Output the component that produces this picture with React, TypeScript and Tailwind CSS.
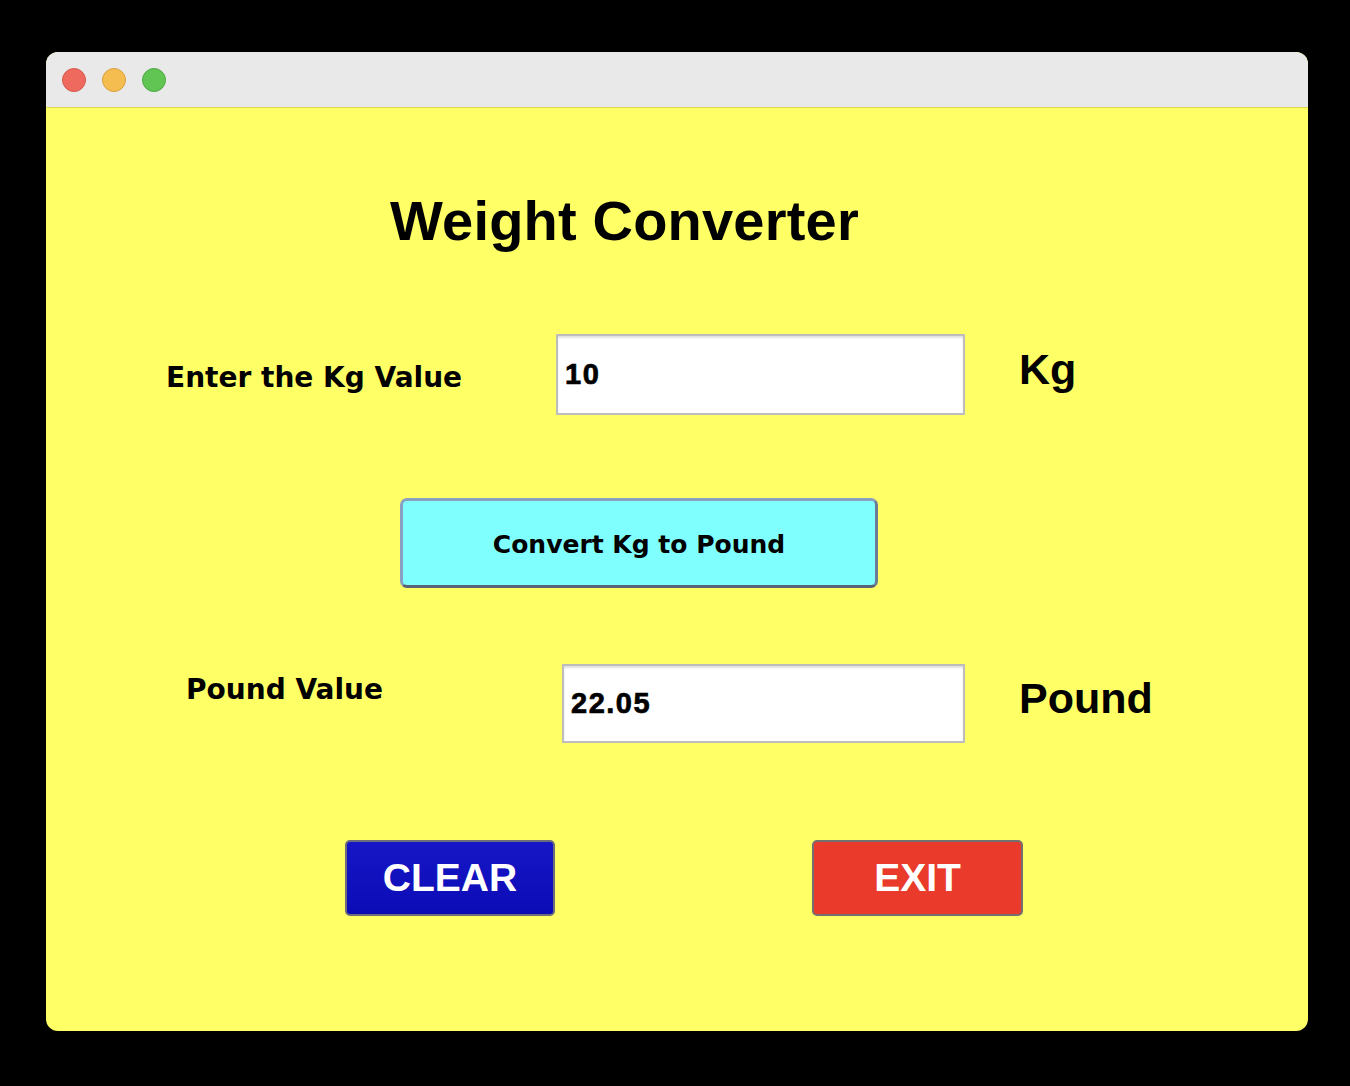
import React from 'react';

const verdana = "font-['DejaVu_Sans',Verdana,sans-serif] font-bold";
const arial = "font-['Liberation_Sans',Arial,sans-serif] font-bold";

const TrafficLights = () => (
  <div className="flex items-center gap-4 pl-4">
    <span className="w-6 h-6 rounded-full bg-[#ee6a5f] border border-[#d8574d]" />
    <span className="w-6 h-6 rounded-full bg-[#f5bd4f] border border-[#d9a13c]" />
    <span className="w-6 h-6 rounded-full bg-[#61c554] border border-[#4fa844]" />
  </div>
);

const Field = ({ value, width, height }: { value: string; width: string; height: string }) => (
  <div
    className={`${width} ${height} flex items-center bg-white border-2 border-[#bdbdbd] shadow-[inset_0_2px_2px_rgba(0,0,0,0.12)] pl-[7px] ${arial} text-[29px] tracking-[1.5px] [-webkit-text-stroke:0.7px_black] text-black`}
  >
    {value}
  </div>
);

export default function App() {
  return (
    <div className="min-h-screen bg-black pt-[52px] pl-[46px] pb-[55px]">
      <div className="w-[1262px] h-[979px] rounded-[12px] overflow-hidden bg-[#ffff66] flex flex-col">
        {/* Title bar */}
        <div className="h-[56px] bg-[#e9e9e9] border-b border-[#dcd84c] flex items-center shrink-0">
          <TrafficLights />
        </div>

        {/* Heading */}
        <h1 className={`mt-[85px] ml-[344px] ${arial} text-[56px] leading-[56px] tracking-[0.2px] text-black`}>
          Weight Converter
        </h1>

        {/* Kg row */}
        <div className="mt-[85px] flex items-center">
          <div className={`w-[510px] pl-[120px] mt-[6px] ${verdana} text-[28px] text-black`}>Enter the Kg Value</div>
          <Field value="10" width="w-[409px]" height="h-[81px]" />
          <div className={`ml-[54px] mb-[10px] ${arial} text-[43px] text-black`}>Kg</div>
        </div>

        {/* Convert button */}
        <div className="mt-[83px] pl-[354px]">
          <button
            className={`w-[478px] h-[90px] pt-[4px] rounded-[7px] bg-[#80ffff] border-[3px] border-[#8aa0c2] border-b-[#5b6275] border-r-[#6c7b96] ${verdana} text-[25px] text-black`}
          >
            Convert Kg to Pound
          </button>
        </div>

        {/* Pound row */}
        <div className="mt-[76px] flex items-center">
          <div className={`w-[516px] pl-[140px] mb-[28px] ${verdana} text-[28px] text-black`}>Pound Value</div>
          <Field value="22.05" width="w-[403px]" height="h-[79px]" />
          <div className={`ml-[54px] mb-[10px] ${arial} text-[43px] text-black`}>Pound</div>
        </div>

        {/* Action buttons */}
        <div className="mt-[97px] flex items-center pl-[299px]">
          <button
            className={`w-[210px] h-[76px] rounded-[5px] bg-gradient-to-b from-[#1616c6] to-[#0b0bb6] border-2 border-[#6d6d7c] ${arial} text-[39px] text-white`}
          >
            CLEAR
          </button>
          <button
            className={`ml-[257px] w-[211px] h-[76px] rounded-[5px] bg-[#ea3a2c] border-2 border-[#757070] ${arial} text-[39px] text-white`}
          >
            EXIT
          </button>
        </div>
      </div>
    </div>
  );
}
